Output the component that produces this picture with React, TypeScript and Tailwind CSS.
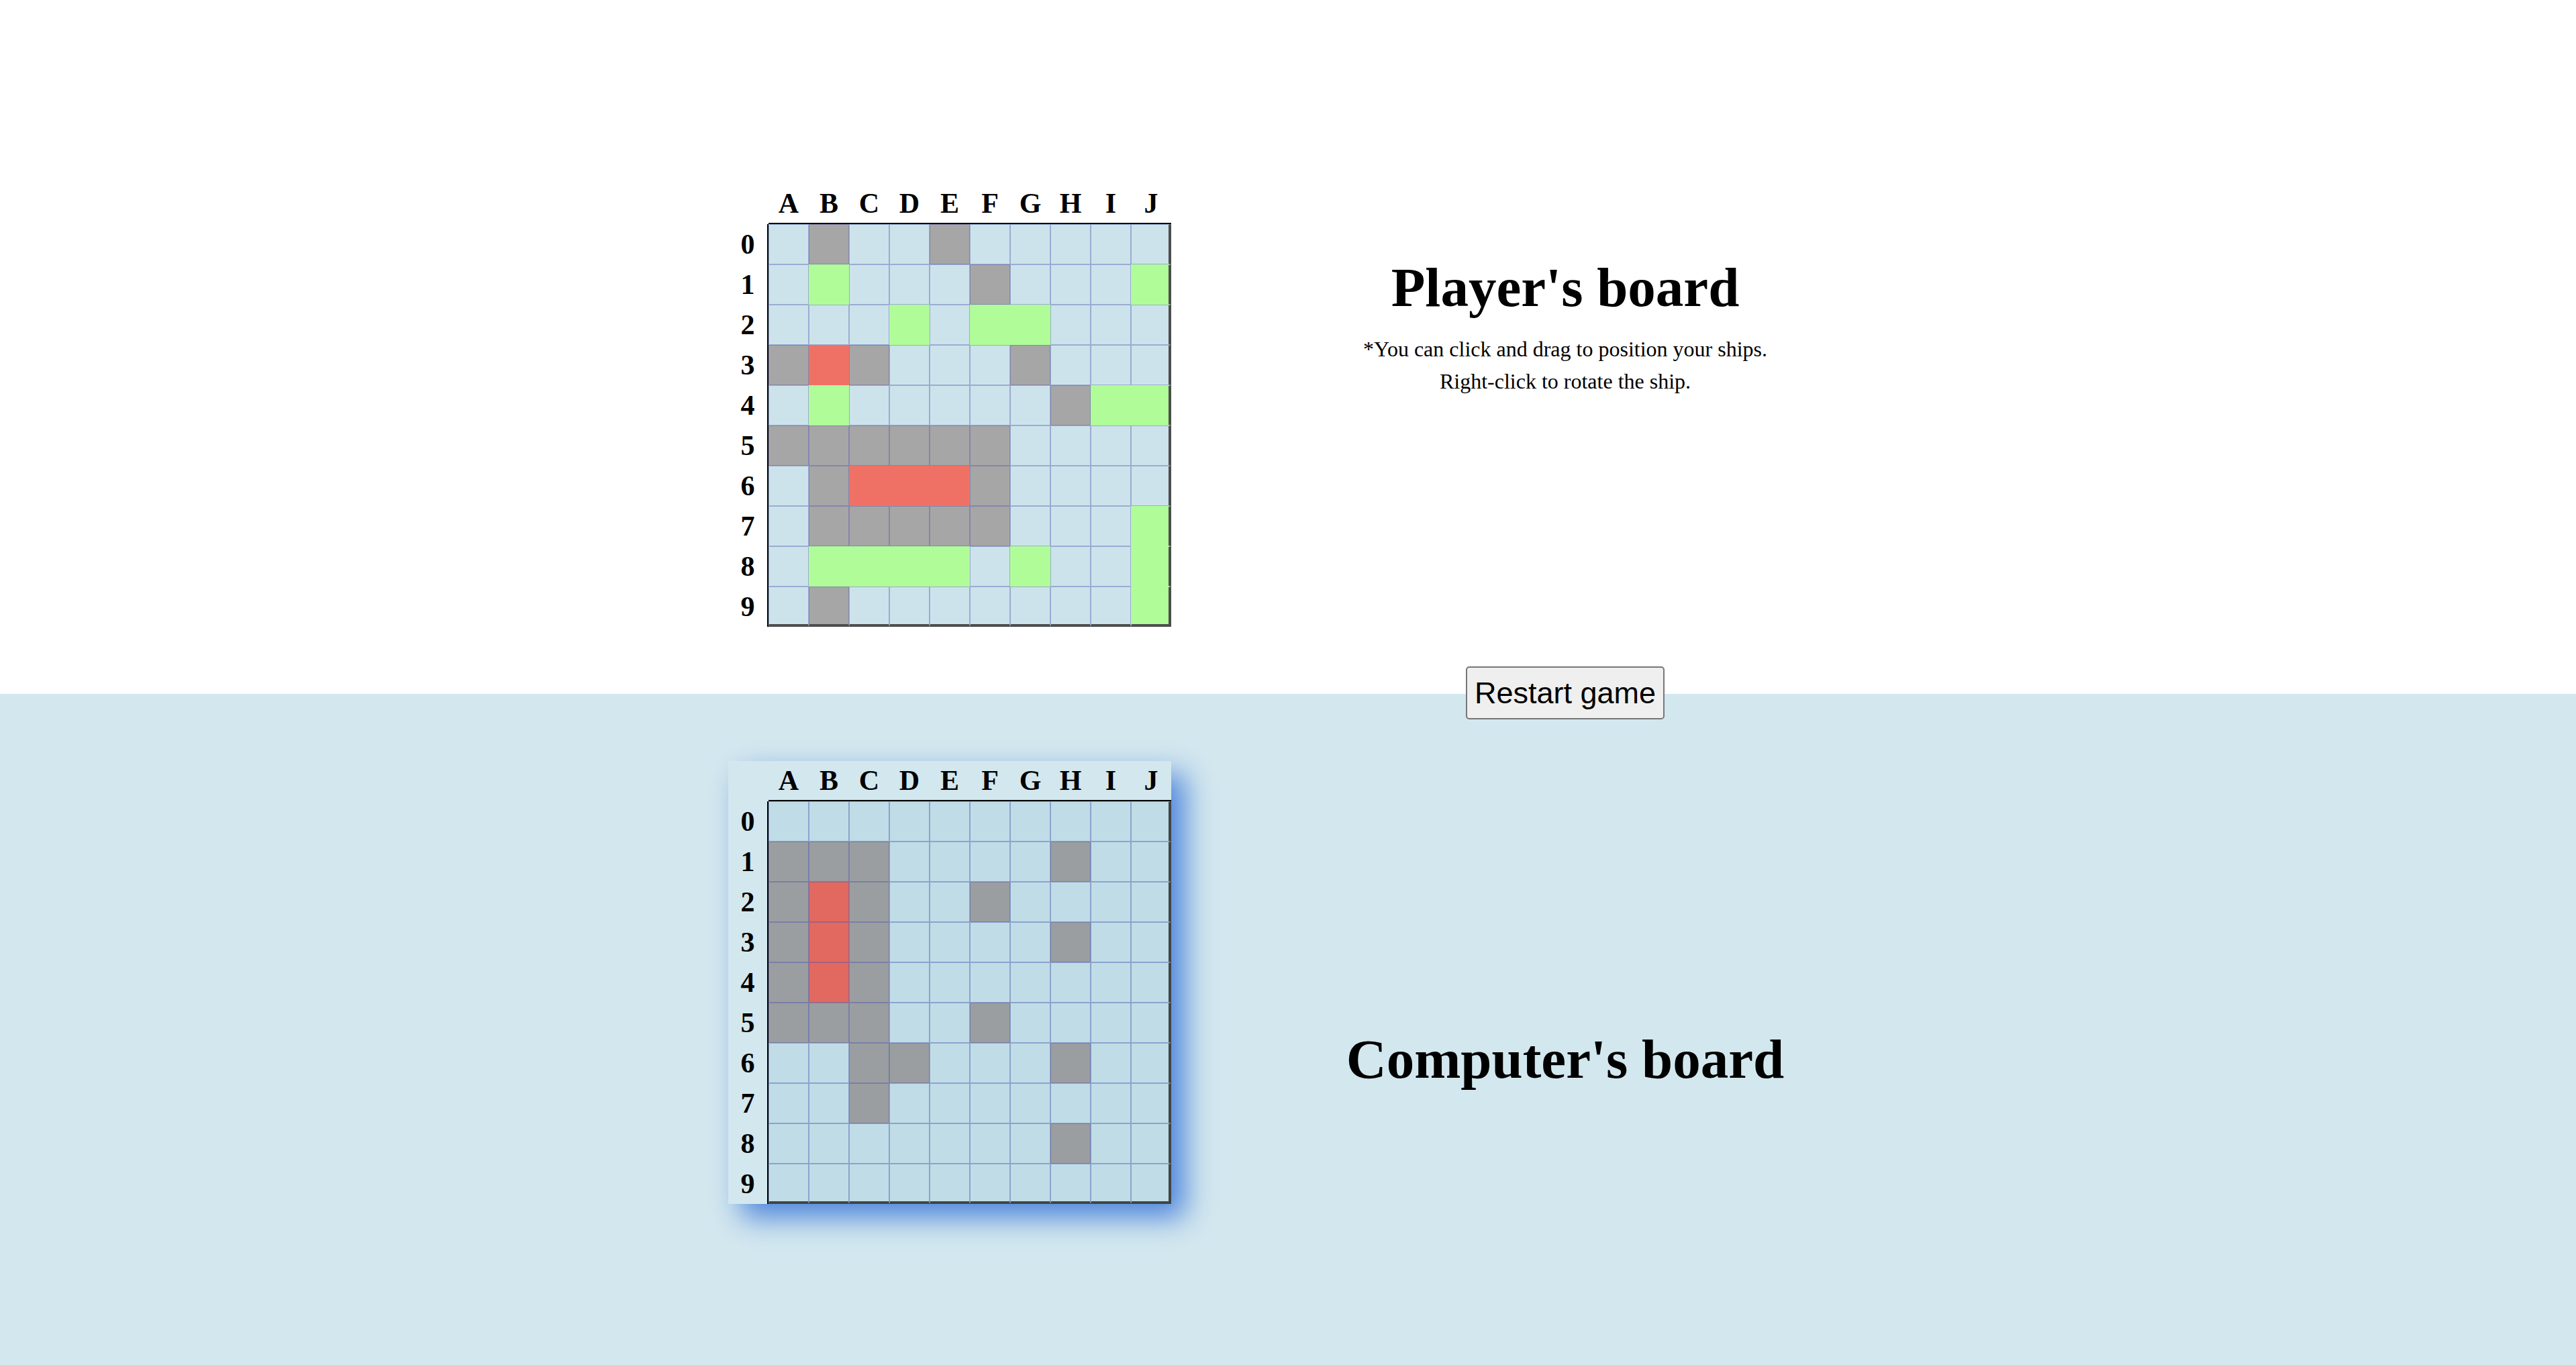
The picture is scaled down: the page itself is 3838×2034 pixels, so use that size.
import React from "react";

type Kind = "water" | "miss" | "hit" | "ship";

const COLUMNS = ["A", "B", "C", "D", "E", "F", "G", "H", "I", "J"];

// One string per row: "." water, "m" miss, "x" hit, "s" ship.
const PLAYER_ROWS = [
  ".m..m.....",
  ".s...m...s",
  "...s.ss...",
  "mxm...m...",
  ".s.....mss",
  "mmmmmm....",
  ".mxxxm....",
  ".mmmmm...s",
  ".ssss.s..s",
  ".m.......s",
];

const COMPUTER_ROWS = [
  "..........",
  "mmm....m..",
  "mxm..m....",
  "mxm....m..",
  "mxm.......",
  "mmm..m....",
  "..mm...m..",
  "..m.......",
  ".......m..",
  "..........",
];

const KINDS: Record<string, Kind> = { ".": "water", m: "miss", x: "hit", s: "ship" };

const PLAYER_CELLS: Record<Kind, string> = {
  water: "bg-[#cde3eb] border-[#9aacd2]",
  miss: "bg-[#a6a6a6] border-[#8586ab]",
  hit: "bg-[#ef7166] border-[#ef7166]",
  ship: "bg-[#affc99] border-[#affc99]",
};

const COMPUTER_CELLS: Record<Kind, string> = {
  water: "bg-[#c0dce7] border-[#8ca3cd]",
  miss: "bg-[#9a9ea0] border-[#797fa6]",
  hit: "bg-[#e26960] border-[#a5607f]",
  ship: "bg-[#affc99] border-[#affc99]",
};

type BoardProps = {
  name: string;
  rows: string[];
  cells: Record<Kind, string>;
  right: string;
  bottom: string;
  className?: string;
};

function Board({ name, rows, cells, right, bottom, className = "" }: BoardProps) {
  return (
    <table
      aria-label={name}
      className={`w-[660px] table-fixed border-separate border-spacing-0 text-[42px] leading-none font-bold ${className}`}
    >
      <thead>
        <tr className="h-[60px]">
          <td className="p-0" />
          {COLUMNS.map((c) => (
            <th key={c} scope="col" className="border-b-2 border-black p-0 text-center">
              {c}
            </th>
          ))}
        </tr>
      </thead>
      <tbody>
        {rows.map((row, y) => (
          <tr key={y} className="h-[60px]">
            <th scope="row" className="border-r-2 border-black p-0 text-center">
              {y}
            </th>
            {row.split("").map((k, x) => (
              <td
                key={x}
                className={`border p-0 ${cells[KINDS[k]]} ${x === 9 ? right : ""} ${y === 9 ? bottom : ""}`}
              />
            ))}
          </tr>
        ))}
      </tbody>
    </table>
  );
}

export default function App() {
  return (
    <main className="bg-white font-['Liberation_Serif',serif] text-black">
      <section className="px-8 pt-[274px] pb-[100px]">
        <div className="mx-auto grid w-full max-w-[1668px] grid-cols-[660px_1fr] gap-[166px]">
          <Board
            name="Player's board"
            rows={PLAYER_ROWS}
            cells={PLAYER_CELLS}
            right="border-r-4 border-r-[#4d4d4d]"
            bottom="border-b-4 border-b-[#4d4d4d]"
          />
          <div className="flex flex-col items-center pt-[106px] text-center">
            <h1 className="text-[83px] leading-[96px] font-bold">Player's board</h1>
            <p className="mt-[20px] text-[32px] leading-[48px]">
              *You can click and drag to position your ships.
              <br />
              Right-click to rotate the ship.
            </p>
          </div>
        </div>
      </section>
      <section className="bg-[#d3e7ee] px-8 pb-[240px]">
        <div className="mx-auto grid w-full max-w-[1668px] grid-cols-[660px_1fr] gap-[166px]">
          <Board
            name="Computer's board"
            rows={COMPUTER_ROWS}
            cells={COMPUTER_CELLS}
            right="border-r-4 border-r-[#404546]"
            bottom="border-b-4 border-b-[#404546]"
            className="mt-[100px] bg-[#d3e7ee] shadow-[20px_20px_40px_#4d85dc]"
          />
          <div className="flex flex-col items-center text-center">
            <button
              type="button"
              className="-mt-[41px] h-[79px] rounded-[5px] border-2 border-[#767676] bg-[#efefef] px-[11px] font-['Liberation_Sans',sans-serif] text-[45px] leading-none"
            >
              Restart game
            </button>
            <h1 className="mt-[458px] text-[83px] leading-[96px] font-bold">Computer's board</h1>
          </div>
        </div>
      </section>
    </main>
  );
}
